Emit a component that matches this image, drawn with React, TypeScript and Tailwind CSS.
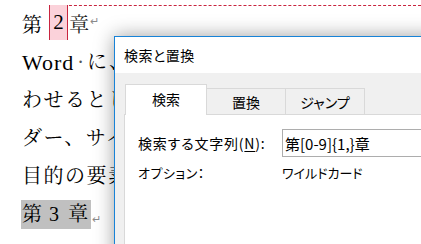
import React from "react";

const docFont = {
  fontFamily: '"Liberation Serif", "Noto Serif CJK JP", "Noto Sans CJK JP", serif',
};
const uiFont = {
  fontFamily: '"Noto Sans CJK JP", "Noto Sans", sans-serif',
};

function Ret() {
  return (
    <span className="ml-[1px] mt-[10px] text-[11px] leading-none text-[#8a8a8a]">↵</span>
  );
}

export default function App() {
  return (
    <div className="relative h-[244px] w-[421px] overflow-hidden bg-white">
      {/* Document */}
      <div className="pl-[22px] pt-[5px] text-[20px] text-black" style={docFont}>
        {/* line 1 */}
        <div className="flex h-[38px] items-start">
          <span className="mt-[1px] w-[27px] leading-[38px]">第</span>
          <div className="flex h-[38px] flex-1 items-start border-t border-dashed border-[#c8243f]">
            <span className="-mt-px flex h-[35px] w-[19px] items-center justify-center border-x border-[#c8243f] bg-[#fbd2da] text-[21px] leading-none">
              2
            </span>
            <span className="ml-[1px] leading-[38px] text-[#222]">章</span>
            <Ret />
          </div>
        </div>
        {/* line 2 */}
        <div className="flex h-[38px] items-center whitespace-nowrap">
          <span className="text-[22px] tracking-[1px]">Word</span>
          <span className="mx-[3px] text-[#555]">·</span>
          <span className="tracking-[2px]">に、使用させる</span>
        </div>
        {/* line 3 */}
        <div className="flex h-[38px] items-center whitespace-nowrap tracking-[1.5px]">
          わせるとします
        </div>
        {/* line 4 */}
        <div className="flex h-[38px] items-center whitespace-nowrap tracking-[1.5px]">
          ダー、サイド
        </div>
        {/* line 5 */}
        <div className="flex h-[38px] items-center whitespace-nowrap tracking-[1.5px]">
          目的の要素を
        </div>
        {/* line 6 */}
        <div className="flex h-[38px] items-center">
          <span className="-ml-[1px] flex h-[29px] w-[70px] items-center bg-[#c0c0c0] leading-none">
            <span className="ml-[1px] w-[27px]">第</span>
            <span className="w-[19px]">3</span>
            <span>章</span>
          </span>
          <Ret />
        </div>
      </div>

      {/* Dialog window */}
      <div
        className="absolute left-[114px] top-[36px] flex h-[230px] w-[340px] flex-col border border-[#1883d7] bg-[#f0f0f0] text-black shadow-[0_0_18px_rgba(0,0,0,0.38)] [font-feature-settings:'palt']"
        style={uiFont}
      >
        <div className="flex h-[36px] items-center bg-white pl-[9px] text-[14px] tracking-[0.5px]">検索と置換</div>
        <div className="flex flex-1 flex-col pl-[9px] pt-[11px]">
          {/* tabs */}
          <div className="flex h-[30px] items-end text-[14px]">
            <div className="relative z-10 ml-[1px] -mb-px flex h-[31px] w-[82px] items-center justify-center border border-b-0 border-[#d9d9d9] bg-white pb-[2px]">
              検索
            </div>
            <div className="flex h-[26px] w-[79px] items-center justify-center border-r border-t border-[#d9d9d9] pt-[1px]">
              置換
            </div>
            <div className="flex h-[26px] w-[79px] items-center justify-center border-r border-t border-[#d9d9d9] pt-[1px]">
              ジャンプ
            </div>
          </div>
          {/* panel */}
          <div className="flex-1 border border-[#d9d9d9] bg-white pl-[13px] pt-[14px]">
            <div className="flex h-[28px] items-center">
              <span className="w-[144px] text-[14px] leading-none tracking-[0.8px]">
                検索する文字列(<span className="underline underline-offset-2">N</span>):
              </span>
              <div className="flex h-[28px] flex-1 items-center border border-[#adadad] bg-white pl-[2px] text-[15px] leading-none [font-feature-settings:normal]">
                第[0-9]{"{"}1,{"}"}章
              </div>
            </div>
            <div className="mt-[6px] flex h-[20px] items-center text-[13px]">
              <span className="w-[144px] tracking-[0.5px]">オプション：</span>
              <span>ワイルドカード</span>
            </div>
          </div>
        </div>
      </div>
    </div>
  );
}
